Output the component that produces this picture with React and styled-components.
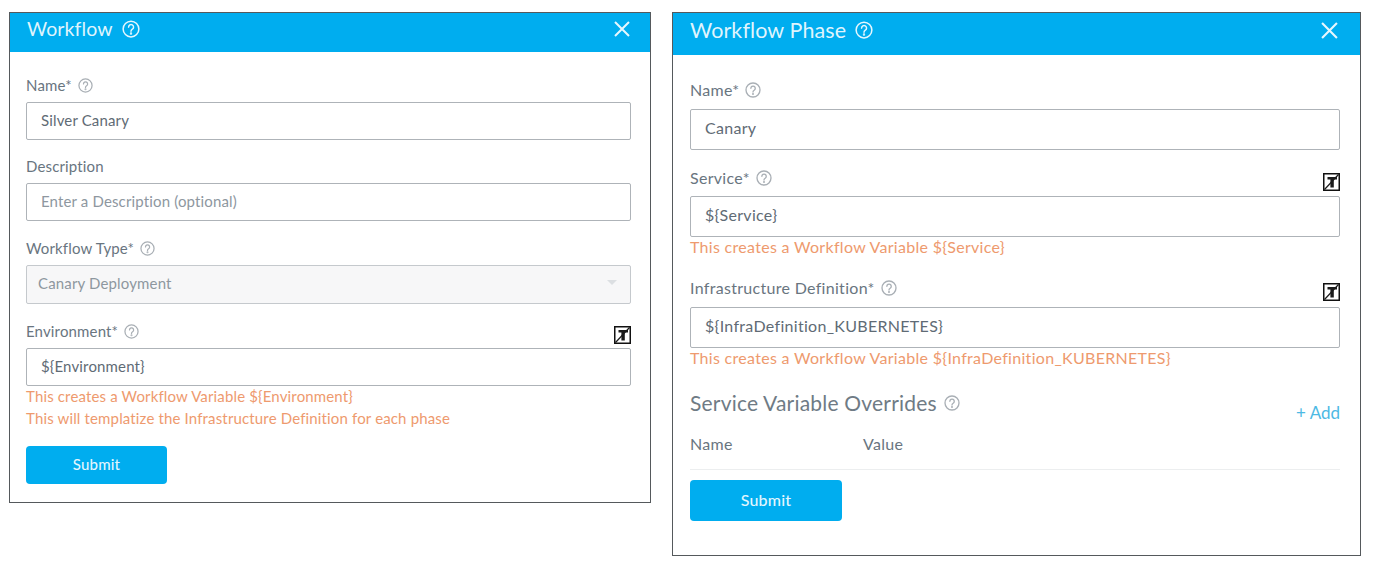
import React from "react";
import styled, { createGlobalStyle } from "styled-components";

const GlobalStyle = createGlobalStyle`
  body {
    margin: 0;
    background: #fff;
    font-family: "Lato", "Open Sans", sans-serif;
    color: #6b7782;
  }
`;

const Page = styled.div`
  display: flex;
  align-items: flex-start;
  gap: 21px;
  padding: 12px 0 0 9px;
  width: 1375px;
  height: 571px;
  box-sizing: border-box;
  overflow: hidden;
`;

const Panel = styled.section`
  width: ${(p) => p.$width}px;
  height: ${(p) => p.$height}px;
  box-sizing: border-box;
  border: 1px solid #55595c;
  background: #fff;
  flex-shrink: 0;
`;

const Header = styled.header`
  height: ${(p) => p.$height}px;
  box-sizing: border-box;
  background: #00adef;
  color: #dff4fd;
  display: flex;
  align-items: center;
  justify-content: space-between;
  padding: 0 ${(p) => p.$right}px 8px ${(p) => p.$left}px;
  font-size: ${(p) => p.$size}px;
  letter-spacing: 0.1px;
`;

const Title = styled.div`
  display: flex;
  align-items: center;
  gap: 9px;
`;

const Body = styled.div`
  padding: ${(p) => p.$top}px ${(p) => p.$right}px 0 ${(p) => p.$left}px;
`;

const LabelRow = styled.div`
  display: flex;
  align-items: flex-end;
  justify-content: space-between;
  height: ${(p) => p.$height}px;
  margin-top: ${(p) => p.$top}px;
  margin-bottom: ${(p) => p.$bottom}px;
`;

const Label = styled.label`
  display: flex;
  align-items: center;
  gap: 6px;
  font-size: ${(p) => p.$size}px;
  letter-spacing: ${(p) => p.$spacing}px;
  line-height: 18px;
  color: #69757f;
`;

const Input = styled.div`
  height: ${(p) => p.$height}px;
  box-sizing: border-box;
  border: 1px solid ${(p) => (p.$disabled ? "#c5c9cd" : "#aeb3b8")};
  border-radius: 2px;
  background: ${(p) => (p.$disabled ? "#f7f7f8" : "#fff")};
  display: flex;
  align-items: center;
  justify-content: space-between;
  padding: 0 ${(p) => (p.$disabled ? 13 : 14)}px ${(p) => p.$lift}px ${(p) => (p.$disabled ? 11 : 14)}px;
  font-size: ${(p) => p.$size}px;
  letter-spacing: ${(p) => p.$spacing}px;
  color: ${(p) => (p.$muted ? "#8e979f" : "#5f6b75")};
`;

const Caret = styled.span`
  width: 0;
  height: 0;
  border-left: 5px solid transparent;
  border-right: 5px solid transparent;
  border-top: 5px solid #dcdfe2;
`;

const Hint = styled.div`
  color: #ee9a6e;
  font-size: ${(p) => p.$size}px;
  letter-spacing: ${(p) => p.$spacing}px;
  line-height: 22px;
  margin-top: ${(p) => p.$top || 0}px;
`;

const Hints = styled.div`
  margin-top: ${(p) => p.$top}px;
`;

const SubmitButton = styled.button`
  display: block;
  width: ${(p) => p.$width}px;
  height: ${(p) => p.$height}px;
  margin-top: ${(p) => p.$top}px;
  border: 0;
  border-radius: 4px;
  background: #00adef;
  color: #e3f6fe;
  font-family: inherit;
  font-size: ${(p) => p.$size}px;
  letter-spacing: 0.2px;
  font-weight: 500;
  padding: 0 0 2px;
`;

const SectionRow = styled.div`
  display: flex;
  justify-content: space-between;
  align-items: flex-start;
  margin-top: 21px;
`;

const SectionTitle = styled.h3`
  display: flex;
  align-items: center;
  gap: 7px;
  margin: 0;
  font-size: 21px;
  letter-spacing: 0.2px;
  font-weight: 400;
  line-height: 26px;
  color: #6f7b85;
`;

const AddLink = styled.a`
  color: #4db9e4;
  font-size: 17px;
  line-height: 20px;
  margin-top: 13px;
`;

const TableHead = styled.div`
  display: grid;
  grid-template-columns: 173px 1fr;
  height: 35px;
  margin-top: 11px;
  border-bottom: 1px solid #eceeef;
  font-size: 16px;
  letter-spacing: 0.3px;
  line-height: 20px;
  color: #69757f;
`;

const TemplateBox = styled.svg`
  margin-bottom: -4px;
  flex-shrink: 0;
`;

const HelpIcon = ({ size, color = "#a9afb5" }) => (
  <svg width={size} height={size} viewBox="0 0 24 24" fill="none" stroke={color} strokeWidth="2" strokeLinecap="round">
    <circle cx="12" cy="12" r="10.5" />
    <path d="M8.8 9.5a3.3 3.3 0 1 1 5 2.8c-1.2.8-1.8 1.3-1.8 2.7" />
    <circle cx="12" cy="18" r="0.6" />
  </svg>
);

const CloseIcon = ({ size }) => (
  <svg width={size} height={size} viewBox="0 0 16 16" fill="none" stroke="#e6f7fe" strokeWidth="2">
    <path d="M1 1l14 14M15 1L1 15" />
  </svg>
);

const TemplateIcon = () => (
  <TemplateBox width="17" height="18" viewBox="0 0 17 18">
    <rect x="0.75" y="0.75" width="15.5" height="16.5" fill="#fff" stroke="#111" strokeWidth="1.5" />
    <path d="M4.5 4h9.5v2.6h-3.2v8H7.4v-8H4.5z" fill="#1a1a1a" />
    <path d="M1.5 16.5L15.5 1.5" stroke="#1a1a1a" strokeWidth="1.2" />
  </TemplateBox>
);

const Field = ({ label, help = true, value, muted, disabled, template, top, labelHeight, gap, height, size, spacing, lift, helpSize }) => (
  <>
    <LabelRow $top={top} $height={labelHeight} $bottom={gap}>
      <Label $size={size} $spacing={spacing}>
        {label}
        {help && <HelpIcon size={helpSize} />}
      </Label>
      {template && <TemplateIcon />}
    </LabelRow>
    <Input $height={height} $size={size} $spacing={spacing} $lift={lift} $muted={muted} $disabled={disabled}>
      {value}
      {disabled && <Caret />}
    </Input>
  </>
);

const App = () => {
  const left = { labelHeight: 18, gap: 8, height: 38, size: 15, spacing: 0.15, lift: 2, helpSize: 15 };
  const right = { labelHeight: 18, gap: 9, height: 41, size: 16, spacing: 0.3, lift: 4, helpSize: 16 };

  return (
    <Page>
      <GlobalStyle />
      <Panel $width={642} $height={491}>
        <Header $height={39} $left={17} $right={20} $size={19.5}>
          <Title>
            Workflow
            <HelpIcon size={18} color="#e6f7fe" />
          </Title>
          <CloseIcon size={16} />
        </Header>
        <Body $top={24} $left={16} $right={19}>
          <Field {...left} top={0} label="Name*" value="Silver Canary" />
          <Field {...left} top={17} label="Description" help={false} muted value="Enter a Description (optional)" />
          <Field {...left} top={18} height={39} lift={4} label="Workflow Type*" disabled muted value="Canary Deployment" />
          <Field {...left} top={18} label="Environment*" template value="${Environment}" />
          <Hints $top={-1}>
            <Hint $size={15} $spacing={0.15}>{"This creates a Workflow Variable ${Environment}"}</Hint>
            <Hint $size={15} $spacing={0.15}>This will templatize the Infrastructure Definition for each phase</Hint>
          </Hints>
          <SubmitButton $width={141} $height={38} $top={17} $size={15}>Submit</SubmitButton>
        </Body>
      </Panel>
      <Panel $width={689} $height={544}>
        <Header $height={42} $left={17} $right={22} $size={21.5}>
          <Title>
            Workflow Phase
            <HelpIcon size={18} color="#e6f7fe" />
          </Title>
          <CloseIcon size={17} />
        </Header>
        <Body $top={26} $left={17} $right={20}>
          <Field {...right} top={0} gap={10} label="Name*" value="Canary" />
          <Field {...right} top={19} label="Service*" template value="${Service}" />
          <Hint $size={16} $spacing={0.3} $top={-1}>{"This creates a Workflow Variable ${Service}"}</Hint>
          <Field {...right} top={21} gap={10} label="Infrastructure Definition*" template value="${InfraDefinition_KUBERNETES}" />
          <Hint $size={16} $spacing={0.3} $top={-1}>{"This creates a Workflow Variable ${InfraDefinition_KUBERNETES}"}</Hint>
          <SectionRow>
            <SectionTitle>
              Service Variable Overrides
              <HelpIcon size={16} />
            </SectionTitle>
            <AddLink>+ Add</AddLink>
          </SectionRow>
          <TableHead>
            <span>Name</span>
            <span>Value</span>
          </TableHead>
          <SubmitButton $width={152} $height={41} $top={10} $size={16}>Submit</SubmitButton>
        </Body>
      </Panel>
    </Page>
  );
};

export default App;
